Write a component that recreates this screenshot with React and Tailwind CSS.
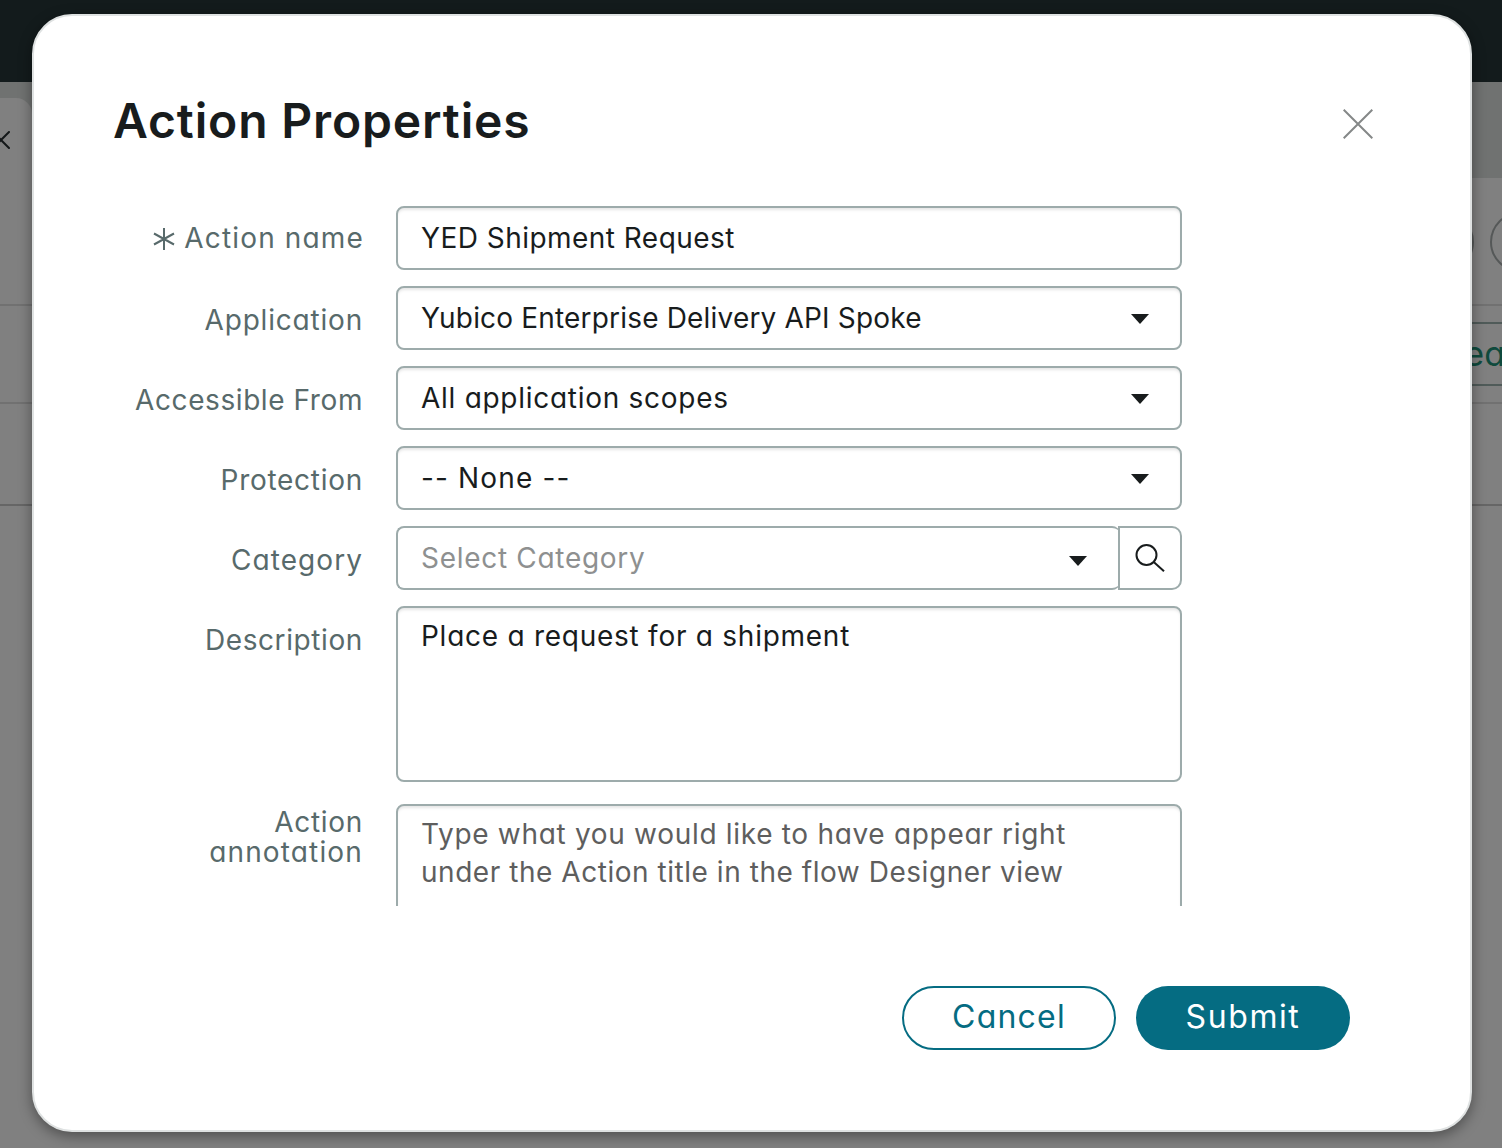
function Caret({ className = "" }) {
  return (
    <svg className={`mr-[31px] h-[10px] w-[18px] shrink-0 ${className}`} viewBox="0 0 18 10">
      <path d="M0 0H18L9 10Z" fill="#181c1d" />
    </svg>
  );
}

const box =
  "border-2 border-[#9dabab] bg-white shadow-[inset_0_3px_3px_-1px_rgba(0,0,0,0.1)]";

function Row({ label, labelClass = "", children }) {
  return (
    <div className="flex gap-[33px]">
      <div className={`flex w-[329px] shrink-0 justify-end text-right text-[#586a6b] ${labelClass}`}>{label}</div>
      {children}
    </div>
  );
}

function Select({ children, textClass }) {
  return (
    <div className={`flex h-16 w-[786px] items-center justify-between rounded-lg pl-[23px] ${box}`}>
      <span className={textClass}>{children}</span>
      <Caret className="mt-[2px]" />
    </div>
  );
}

function Backdrop() {
  return (
    <div className="h-full w-full overflow-hidden bg-[#808080]">
      <div className="h-[82px] bg-[#131b1c]" />
      <div className="flex h-24 items-end bg-[#707271]">
        <div className="flex h-20 w-8 rounded-tr-2xl bg-[#808080]">
          <svg className="mt-[33px] -ml-[8px] h-[18px] w-[18px]" viewBox="0 0 18 18" stroke="#141819" strokeWidth="2" strokeLinecap="round">
            <path d="M1 1L17 17M17 1L1 17" />
          </svg>
        </div>
      </div>
      <div className="flex h-32 items-center justify-end gap-4 border-b-2 border-[#717171] pt-[2px]">
        <div className="h-[60px] w-[60px] shrink-0 rounded-full border-2 border-[#555858]" />
        <div className="-mr-12 h-[60px] w-[60px] shrink-0 rounded-full border-2 border-[#555858]" />
      </div>
      <div className="flex h-[98px] items-center justify-end border-b-2 border-[#717171]">
        <div className="flex h-16 w-24 items-center justify-end border-y-2 border-[#505b59] pb-[2px] text-[34px] text-[#0f4a3d]">
          <span className="-mr-[3px]">ea</span>
        </div>
      </div>
      <div className="h-[102px] border-b-2 border-[#666666]" />
    </div>
  );
}

export default function App() {
  return (
    <div className="relative h-[1148px] w-[1502px] overflow-hidden font-['Inter',sans-serif] [font-feature-settings:'cv11']">
      <Backdrop />
      <div className="absolute top-[14px] left-8 h-[1118px] w-[1440px] rounded-[40px] border-2 border-[#dfe2e2] bg-white shadow-[0_4px_14px_rgba(0,0,0,0.4)]">
        <div className="flex items-center justify-between pt-[77px] pr-[97px] pl-[79px]">
          <h1 className="text-[48px] leading-[56px] font-semibold tracking-[0.85px] text-[#181c1d]">Action Properties</h1>
          <svg className="mt-[6px] h-[30px] w-[30px]" viewBox="0 0 30 30" stroke="#858888" strokeWidth="2">
            <path d="M0.7 0.7L29.3 29.3M29.3 0.7L0.7 29.3" />
          </svg>
        </div>

        <div className="mt-[57px] flex h-[700px] flex-col gap-4 overflow-hidden text-[28px] leading-[38px] text-[#181c1d]">
          <Row
            labelClass="items-center gap-[9px]"
            label={
              <>
                <svg className="mt-[2px] h-[22px] w-[22px]" viewBox="0 0 22 22" stroke="#586a6b" strokeWidth="2">
                  <path d="M11 0V22M1 5.5L21 16.5M21 5.5L1 16.5" />
                </svg>
                <span className="-mr-[1px] tracking-[1.15px]">Action name</span>
              </>
            }
          >
            <div className={`flex h-16 w-[786px] items-center rounded-lg pl-[23px] ${box}`}>
              <span className="tracking-[0.46px]">YED Shipment Request</span>
            </div>
          </Row>
          <Row labelClass="items-center pt-1" label={<span className="tracking-[0.8px]">Application</span>}>
            <Select textClass="tracking-[0.18px]">Yubico Enterprise Delivery API Spoke</Select>
          </Row>
          <Row labelClass="items-center pt-1" label={<span className="tracking-[0.58px]">Accessible From</span>}>
            <Select textClass="tracking-[0.72px]">All application scopes</Select>
          </Row>
          <Row labelClass="items-center pt-1" label={<span className="tracking-[0.72px]">Protection</span>}>
            <Select textClass="tracking-[1.15px]">-- None --</Select>
          </Row>
          <Row labelClass="items-center pt-1" label={<span className="tracking-[1.05px]">Category</span>}>
            <div className="flex">
              <div className="flex h-16 w-[724px] items-center justify-between rounded-lg border-2 border-r-0 border-[#9dabab] pl-[23px]">
                <span className="tracking-[0.7px] text-[#8e9090]">Select Category</span>
                <Caret className="mt-[6px] mr-[33px]" />
              </div>
              <div className="-ml-[2px] flex h-16 w-16 items-center justify-center rounded-r-[10px] border-2 border-[#9dabab] bg-white">
                <svg className="-mt-[1px] h-[30px] w-[30px]" viewBox="0 0 30 30" fill="none" stroke="#181c1d" strokeWidth="2">
                  <circle cx="11.5" cy="12" r="10" />
                  <path d="M19 19.3L29 28.3" />
                </svg>
              </div>
            </div>
          </Row>
          <Row labelClass="items-start pt-[15px]" label={<span className="tracking-[0.6px]">Description</span>}>
            <div className={`h-44 w-[786px] rounded-lg pt-[9px] pl-[23px] ${box}`}>
              <span className="tracking-[0.74px]">Place a request for a shipment</span>
            </div>
          </Row>
          <div className="mt-[6px]">
            <Row
              labelClass="flex-col items-end !justify-start pt-[3px] leading-[30px]"
              label={
                <>
                  <div className="h-[30px] tracking-[0.7px]">Action</div>
                  <div className="h-[30px] tracking-[1.15px]">annotation</div>
                </>
              }
            >
              <div className={`h-44 w-[786px] rounded-lg pt-[9px] pl-[23px] text-[#5e5e5e] ${box}`}>
                <div className="tracking-[0.69px]">Type what you would like to have appear right</div>
                <div className="tracking-[0.54px]">under the Action title in the flow Designer view</div>
              </div>
            </Row>
          </div>
        </div>

        <div className="mt-20 flex justify-end gap-5 pr-[120px] text-[32px]">
          <button className="flex h-16 w-[214px] items-center justify-center rounded-full border-2 border-[#056c82] pb-[2px] tracking-[1.2px] text-[#056c82]">
            Cancel
          </button>
          <button className="flex h-16 w-[214px] items-center justify-center rounded-full bg-[#056c82] pb-[2px] tracking-[1.6px] text-white">
            Submit
          </button>
        </div>
      </div>
    </div>
  );
}
